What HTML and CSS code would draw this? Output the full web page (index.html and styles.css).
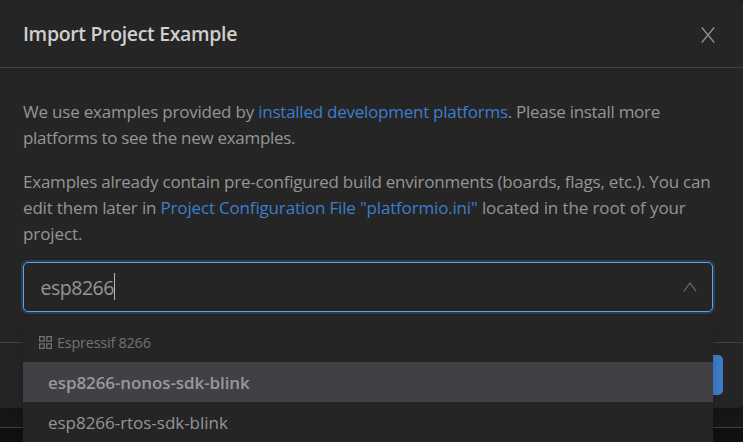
FILE: index.html
```
<!DOCTYPE html>
<html lang="en">
<head>
<meta charset="utf-8">
<title>Import Project Example</title>
<link rel="stylesheet" href="styles.css">
</head>
<body>
<div class="page">
  <section class="modal">
    <header class="modal-header">
      <h1>Import Project Example</h1>
      <svg class="close" width="14" height="16" viewBox="0 0 14 16" fill="none" stroke="currentColor" stroke-width="1.5"><path d="M0.8 0.5 13.2 15.5M13.2 0.5 0.8 15.5"/></svg>
    </header>
    <div class="modal-body">
      <p><span class="t-intro">We use examples provided by </span><a class="t-tight">installed development platforms</a><span class="t-tighter">. Please install more</span><br><span class="t-tighter">platforms to see the new examples.</span></p>
      <p><span class="t-long">Examples already contain pre-configured build environments (boards, flags, etc.). You can</span><br><span class="t-edit">edit them later in </span><a class="t-edit">Project Configuration File "platformio.ini"</a><span class="t-loose"> located in the root of your</span><br><span class="t-loose">project.</span></p>
      <div class="select">
        <span class="query">esp8266</span><i class="caret"></i>
        <svg class="arrow" width="14" height="10" viewBox="0 0 14 10" fill="none" stroke="currentColor" stroke-width="1.3"><path d="M0.8 9.4 7 1.2 13.2 9.4"/></svg>
        <div class="dropdown">
          <div class="group">
            <svg width="13" height="13" viewBox="0 0 13 13" fill="none" stroke="currentColor" stroke-width="1.3"><path d="M.6.6h4.6v4.6H.6zM7.8.6h4.6v4.6H7.8zM.6 7.8h4.6v4.6H.6zM7.8 7.8h4.6v4.6H7.8z"/></svg>
            <span>Espressif 8266</span>
          </div>
          <div class="option active">esp8266-nonos-sdk-blink</div>
          <div class="option">esp8266-rtos-sdk-blink</div>
        </div>
      </div>
    </div>
    <footer class="modal-footer"><div class="primary"></div></footer>
  </section>
  <div class="strip"></div>
  <div class="backdrop"></div>
</div>
</body>
</html>
```
FILE: styles.css
```
* { box-sizing: border-box; }
body { margin: 0; background: #101010; color: #959595; font: 17px/26px "Open Sans", "Noto Sans", sans-serif; overflow: hidden; }
.page { height: 442px; display: flex; flex-direction: column; background: #181818; overflow: hidden; }
.modal { flex: none; height: 408px; display: flex; flex-direction: column; background: #252525; border-radius: 0 5px 5px 0; box-shadow: 0 5px 14px rgba(0, 0, 0, .22); position: relative; z-index: 1; }
.modal-header { height: 68px; padding: 0 28px 0 23px; display: flex; align-items: center; justify-content: space-between; border-bottom: 1px solid #414141; }
h1 { margin: 0; font-size: 19.5px; line-height: 28px; font-weight: 600; letter-spacing: -.34px; color: #cfcfcf; }
.close { color: #8a8a8a; margin-top: 3px; }
.modal-body { height: 274px; padding: 31px 30px 0 23px; }
p { margin: 0 0 18px; white-space: nowrap; }
a { color: #3e7dcc; }
.t-intro { letter-spacing: -.205px; }
.t-tight { letter-spacing: -.25px; }
.t-tighter { letter-spacing: -.29px; }
.t-long { letter-spacing: -.225px; }
.t-edit { letter-spacing: -.17px; }
.t-loose { letter-spacing: -.1px; }
.select { height: 50px; margin-top: 15px; padding: 0 15px 0 17px; display: flex; align-items: center; position: relative; border: 1px solid #64a4e4; border-radius: 5px; box-shadow: 0 0 0 2px rgba(62, 125, 204, .27); }
p + p { margin-bottom: 0; }
.query { font-size: 19.5px; letter-spacing: -.48px; margin: 2px 0 0 -.5px; }
.caret { width: 1px; height: 27px; background: #b8b8b8; margin-top: -1px; }
.arrow { color: #666; margin-left: auto; margin-top: -1px; }
.dropdown { position: absolute; top: 53px; left: -1px; right: -1px; height: 140px; background: #252525; box-shadow: 0 3px 10px rgba(0, 0, 0, .2); }
.group { height: 46px; padding: 7px 16px 0; display: flex; align-items: center; gap: 5px; color: #727272; font-size: 14.5px; letter-spacing: -.25px; }
.option { height: 40px; padding-left: 25px; line-height: 42px; letter-spacing: -.03px; }
.active { background: #404045; font-weight: 600; letter-spacing: -.09px; color: #999; }
.modal-footer { height: 66px; border-top: 1px solid #414141; display: flex; justify-content: flex-end; padding: 12px 20px 0; }
.primary { width: 90px; height: 40px; border-radius: 5px; background: #3e7dcc; }
.strip { flex: none; height: 20px; border-bottom: 1px solid #414141; }
.backdrop { flex: 1; background: #101010; }
```
